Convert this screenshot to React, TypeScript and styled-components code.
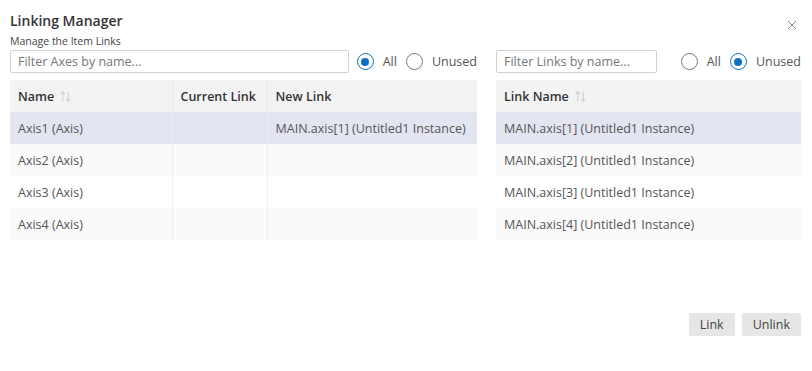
import React, { FC, useState } from "react";
import styled, { createGlobalStyle } from "styled-components";

const GlobalStyle = createGlobalStyle`
  html, body {
    margin: 0;
    padding: 0;
    background: #fff;
  }
  body {
    font-family: "Open Sans", "Noto Sans", sans-serif;
    color: #333;
  }
`;

interface AxisRow {
  name: string;
  current: string;
  next: string;
}

const axes: AxisRow[] = [
  { name: "Axis1 (Axis)", current: "", next: "MAIN.axis[1] (Untitled1 Instance)" },
  { name: "Axis2 (Axis)", current: "", next: "" },
  { name: "Axis3 (Axis)", current: "", next: "" },
  { name: "Axis4 (Axis)", current: "", next: "" },
];

const links = [
  "MAIN.axis[1] (Untitled1 Instance)",
  "MAIN.axis[2] (Untitled1 Instance)",
  "MAIN.axis[3] (Untitled1 Instance)",
  "MAIN.axis[4] (Untitled1 Instance)",
];

const SortIcon: FC = () => (
  <svg width="13" height="13" viewBox="0 0 12 12" fill="none" stroke="#cfcfcf" strokeWidth="1">
    <path d="M3.5 10.5V1.5M1.5 3.5L3.5 1.5L5.5 3.5" />
    <path d="M8.5 1.5V10.5M6.5 8.5L8.5 10.5L10.5 8.5" />
  </svg>
);

const Radio: FC<{ checked: boolean; label: string; onClick: () => void }> = ({ checked, label, onClick }) => (
  <RadioLabel onClick={onClick}>
    <RadioCircle $checked={checked} />
    <span>{label}</span>
  </RadioLabel>
);

const App: FC = () => {
  const [axisFilter, setAxisFilter] = useState<"all" | "unused">("all");
  const [linkFilter, setLinkFilter] = useState<"all" | "unused">("unused");

  return (
    <>
      <GlobalStyle />
      <Dialog>
        <Header>
          <div>
            <Title>Linking Manager</Title>
            <Subtitle>Manage the Item Links</Subtitle>
          </div>
          <Close>
            <svg width="10" height="10" viewBox="0 0 10 10" stroke="#8a8a8a" strokeWidth="1">
              <path d="M1 1L9 9M9 1L1 9" />
            </svg>
          </Close>
        </Header>
        <Panels>
          <Panel $width={467}>
            <Toolbar>
              <Filter placeholder="Filter Axes by name..." />
              <Radio checked={axisFilter === "all"} label="All" onClick={() => setAxisFilter("all")} />
              <Radio checked={axisFilter === "unused"} label="Unused" onClick={() => setAxisFilter("unused")} />
            </Toolbar>
            <Table>
              <colgroup>
                <col style={{ width: 162 }} />
                <col style={{ width: 95 }} />
                <col />
              </colgroup>
              <thead>
                <tr>
                  <Th>
                    <HeadInner>Name <SortIcon /></HeadInner>
                  </Th>
                  <Th>Current Link</Th>
                  <Th>New Link</Th>
                </tr>
              </thead>
              <tbody>
                {axes.map((a, i) => (
                  <Row key={a.name} $index={i} $selected={i === 0}>
                    <Td>{a.name}</Td>
                    <Td>{a.current}</Td>
                    <Td>{a.next}</Td>
                  </Row>
                ))}
              </tbody>
            </Table>
          </Panel>
          <Panel $width={305}>
            <Toolbar>
              <Filter $narrow placeholder="Filter Links by name..." />
              <RadioGroup>
                <Radio checked={linkFilter === "all"} label="All" onClick={() => setLinkFilter("all")} />
                <Radio checked={linkFilter === "unused"} label="Unused" onClick={() => setLinkFilter("unused")} />
              </RadioGroup>
            </Toolbar>
            <Table>
              <thead>
                <tr>
                  <Th $plain>
                    <HeadInner>Link Name <SortIcon /></HeadInner>
                  </Th>
                </tr>
              </thead>
              <tbody>
                {links.map((l, i) => (
                  <Row key={l} $index={i} $selected={i === 0}>
                    <Td $plain>{l}</Td>
                  </Row>
                ))}
              </tbody>
            </Table>
          </Panel>
        </Panels>
        <Footer>
          <Button>Link</Button>
          <Button>Unlink</Button>
        </Footer>
      </Dialog>
    </>
  );
};

export default App;

const Dialog = styled.div`
  width: 812px;
  height: 371px;
  box-sizing: border-box;
  padding: 10px 11px 0 10px;
  display: flex;
  flex-direction: column;
`;

const Header = styled.div`
  display: flex;
  justify-content: space-between;
  align-items: flex-start;
`;

const Title = styled.div`
  font-size: 14px;
  font-weight: 600;
  color: #333;
  line-height: 20px;
  margin-top: 1px;
`;

const Subtitle = styled.div`
  font-size: 10.5px;
  color: #444;
  line-height: 14px;
  margin-top: 3px;
`;

const Close = styled.div`
  padding: 3px 4px 0 0;
  cursor: pointer;
`;

const Panels = styled.div`
  display: flex;
  gap: 19px;
  margin-top: 2px;
`;

const Panel = styled.div<{ $width: number }>`
  width: ${(p) => p.$width}px;
  display: flex;
  flex-direction: column;
  gap: 7px;
`;

const Toolbar = styled.div`
  display: flex;
  align-items: center;
  height: 23px;
`;

const Filter = styled.input<{ $narrow?: boolean }>`
  box-sizing: border-box;
  width: ${(p) => (p.$narrow ? 161 : 339)}px;
  height: 23px;
  border: 1px solid #d2d2d2;
  border-radius: 2px;
  padding: 0 7px;
  font-family: inherit;
  font-size: 12.5px;
  color: #333;
  outline: none;
  margin-right: 8px;
  &::placeholder {
    color: #777;
  }
`;

const RadioGroup = styled.div`
  display: flex;
  margin-left: auto;
`;

const RadioLabel = styled.label`
  display: flex;
  align-items: center;
  gap: 9px;
  font-size: 12.5px;
  color: #555;
  margin-right: 9px;
  cursor: pointer;
  &:last-child {
    margin-right: 0;
  }
`;

const RadioCircle = styled.span<{ $checked: boolean }>`
  box-sizing: border-box;
  width: 17px;
  height: 17px;
  border-radius: 50%;
  border: 1.5px solid ${(p) => (p.$checked ? "#0e6ec5" : "#777")};
  display: flex;
  align-items: center;
  justify-content: center;
  &::after {
    content: "";
    width: 8px;
    height: 8px;
    border-radius: 50%;
    background: #0e6ec5;
    display: ${(p) => (p.$checked ? "block" : "none")};
  }
`;

const Table = styled.table`
  width: 100%;
  border-collapse: collapse;
  table-layout: fixed;
  font-size: 12.5px;
`;

const Th = styled.th<{ $plain?: boolean }>`
  height: 32px;
  padding: 0 8px;
  text-align: left;
  font-weight: 600;
  color: #333;
  background: #f3f3f3;
  border-right: ${(p) => (p.$plain ? "none" : "1px solid #e8e8e8")};
  &:last-child {
    border-right: none;
  }
`;

const HeadInner = styled.span`
  display: inline-flex;
  align-items: center;
  gap: 5px;
`;

const Row = styled.tr<{ $index: number; $selected: boolean }>`
  background: ${(p) => (p.$selected ? "#e3e5f1" : p.$index % 2 === 1 ? "#fafafa" : "#fff")};
`;

const Td = styled.td<{ $plain?: boolean }>`
  height: 32px;
  padding: 0 8px;
  color: #555;
  white-space: nowrap;
  overflow: hidden;
  border-right: ${(p) => (p.$plain ? "none" : "1px solid #eeeeee")};
  &:last-child {
    border-right: none;
  }
`;

const Footer = styled.div`
  display: flex;
  justify-content: flex-end;
  gap: 7px;
  margin-top: auto;
  margin-bottom: 35px;
`;

const Button = styled.button`
  height: 23px;
  padding: 0 11px;
  border: none;
  border-radius: 2px;
  background: #e6e6e6;
  font-family: inherit;
  font-size: 12.5px;
  color: #444;
  cursor: pointer;
`;
